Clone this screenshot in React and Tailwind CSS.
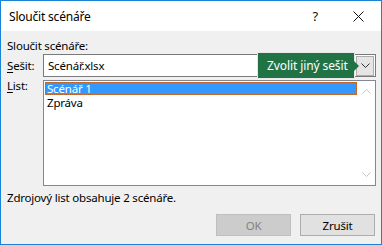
import React from 'react';

const font = { fontFamily: '"Noto Sans", "Segoe UI", sans-serif' };

function Chevron({ className, up }) {
  return (
    <svg width="9" height="6" viewBox="0 0 9 6" className={className}>
      <path d={up ? 'M0.5 5.5 L4.5 1.5 L8.5 5.5' : 'M0.5 0.5 L4.5 4.5 L8.5 0.5'} fill="none" stroke="currentColor" strokeWidth="1" />
    </svg>
  );
}

export default function App() {
  return (
    <div className="w-[382px] h-[245px] border border-[#1883d7] bg-[#f0f0f0] flex flex-col text-[11.5px] tracking-[-0.2px] leading-[15px] text-black" style={font}>
      {/* Title bar */}
      <div className="h-[30px] bg-white flex items-center shrink-0">
        <span className="ml-[8px] text-[12px]">Sloučit scénáře</span>
        <span className="ml-auto mr-[35px] text-[13px] text-[#111]">?</span>
        <svg width="11" height="11" viewBox="0 0 11 11" className="mr-[17px]">
          <path d="M0.5 0.5 L10.5 10.5 M10.5 0.5 L0.5 10.5" stroke="#111" strokeWidth="1" />
        </svg>
      </div>

      <div className="flex flex-col pl-[6px] pr-[5px]">
        <div className="mt-[7px] h-[15px]">Sloučit scénáře:</div>

        {/* Sešit row */}
        <div className="mt-[1px] flex relative">
          <div className="w-[36px] h-[23px] flex items-center"><span><u className="underline-offset-2">S</u>ešit:</span></div>
          <div className="w-[333px] h-[23px] border border-[#7a7a7a] bg-white flex items-center">
            <span className="ml-[4px]">Scénář.xlsx</span>
            <div className="ml-auto mr-[1px] w-[18px] h-[20px] border border-[#adadad] bg-[#e5e5e5] flex items-center justify-center text-[#333]">
              <Chevron />
            </div>
          </div>
          {/* tooltip */}
          <div className="absolute left-[250px] top-[-2px] h-[27px] w-[98px] bg-[#217346] border border-[#e8e8e8] flex items-center pl-[9px] text-white text-[12px] tracking-[-0.1px]">
            Zvolit jiný sešit
            <div className="absolute right-[-5px] top-[8px] w-0 h-0 border-y-[5px] border-y-transparent border-l-[5px] border-l-[#217346]" />
          </div>
        </div>

        {/* List row */}
        <div className="mt-[3px] flex">
          <div className="w-[36px] mt-[-2px]"><span><u className="underline-offset-2">L</u>ist:</span></div>
          <div className="w-[333px] h-[106px] border border-[#828790] bg-white flex">
            <div className="flex-1 flex flex-col pt-[1px] pl-[1px]">
              <div className="h-[13px] bg-[#3399ff] text-white border border-dotted border-[#c06020] pl-[1px] flex items-center">
                <span className="leading-[11px]">Scénář 1</span>
              </div>
              <div className="h-[13px] mt-[1px] pl-[2px] flex items-center">
                <span className="leading-[12px]">Zpráva</span>
              </div>
            </div>
            <div className="w-[18px] flex flex-col items-center justify-between py-[7px] text-[#c5c5c5]">
              <Chevron up />
              <Chevron />
            </div>
          </div>
        </div>

        <div className="mt-[4px] h-[15px]">Zdrojový list obsahuje 2 scénáře.</div>

        {/* Buttons */}
        <div className="mt-[9px] flex justify-end gap-[9px] pr-[1px]">
          <div className="w-[75px] h-[22px] border border-[#bfbfbf] bg-[#cccccc] text-[#838383] flex items-center justify-center">OK</div>
          <div className="w-[75px] h-[22px] border border-[#adadad] bg-[#e1e1e1] flex items-center justify-center">Zrušit</div>
        </div>
      </div>
    </div>
  );
}
